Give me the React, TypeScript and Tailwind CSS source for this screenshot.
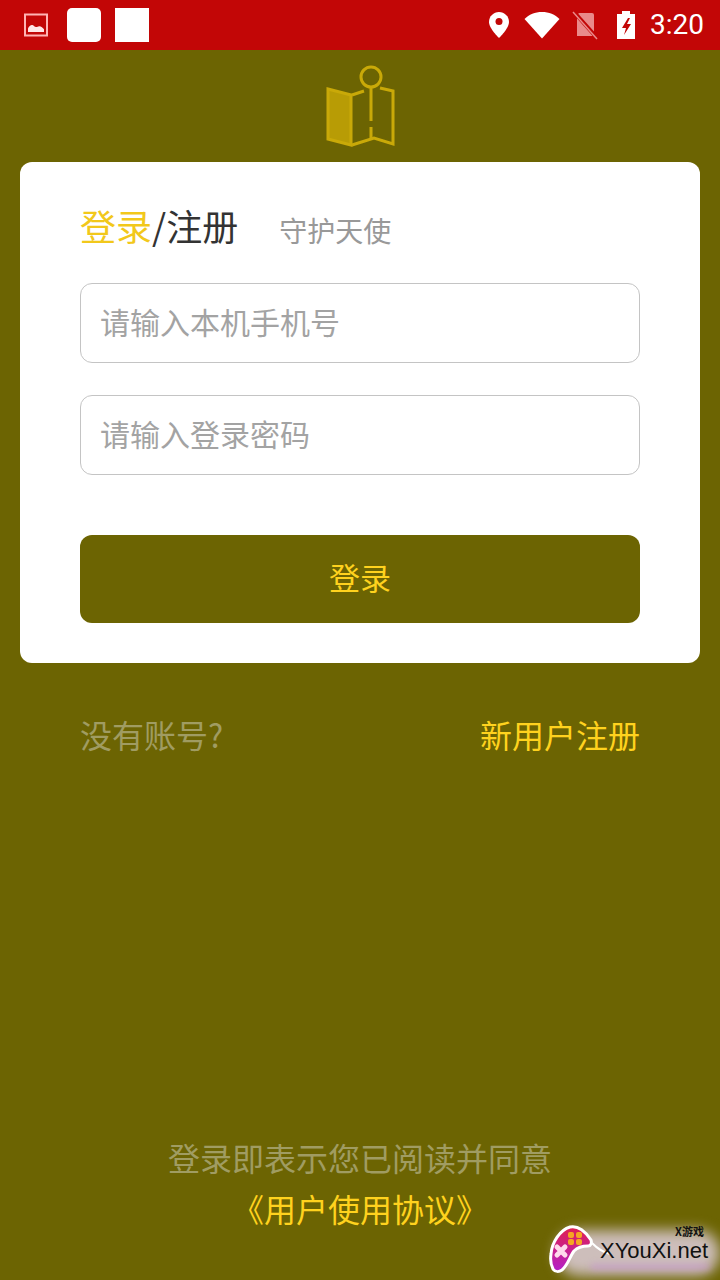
import React from 'react'

const cjk = { fontFamily: '"Noto Sans CJK SC", sans-serif' }

function StatusBar() {
  return (
    <div className="h-[50px] bg-[#c20606] flex items-center pl-[24px] pr-[16px] shrink-0">
      {/* image notification */}
      <svg width="24" height="24" viewBox="0 0 24 24" className="mr-[19px]">
        <rect x="1" y="1.5" width="22" height="21" fill="none" stroke="#ffb3b3" strokeWidth="2" />
        <path d="M4 19v-3.5c1-2.5 3-4 4.5-3.500 1.500.5 2 2 3.500 2s2-1 3.500-.8 3.500 1.500 4.500 3v2.800z" fill="#ffe6e6" />
      </svg>
      <div className="w-[34px] h-[34px] bg-white rounded-[5px] mr-[14px]" />
      <div className="w-[34px] h-[34px] bg-white" />
      <div className="flex-1" />
      <svg width="22" height="28" viewBox="0 0 22 28" className="mr-[14px]">
        <path d="M11 1C5.500 1 1 5.400 1 11c0 6.500 10 16 10 16s10-9.500 10-16C21 5.400 16.500 1 11 1z" fill="#fff" />
        <circle cx="11" cy="10.500" r="3.500" fill="#c20606" />
      </svg>
      <svg width="36" height="28" viewBox="0 0 36 28" className="mr-[12px]">
        <path d="M18 27.500L.5 8C5 3.500 11 1 18 1s13 2.500 17.500 7z" fill="#fff" />
      </svg>
      <svg width="26" height="30" viewBox="0 0 26 30" className="mr-[18px]">
        <path d="M7 3h13a2 2 0 0 1 2 2v21H5V5z" fill="#e98a8a" />
        <path d="M2 2l23 26" stroke="#c20606" strokeWidth="4" />
        <path d="M1 2l24 27" stroke="#e98a8a" strokeWidth="1.500" />
      </svg>
      <svg width="20" height="30" viewBox="0 0 20 30" className="mr-[14px]">
        <path d="M6 1h8v3h5v25H1V4h5z" fill="#fff" />
        <path d="M12 8l-6 10h4l-2 7 7-11h-4l3-6z" fill="#c20606" />
      </svg>
      <span className="text-white text-[28px] leading-none" style={{ fontFamily: 'Roboto, sans-serif' }}>3:20</span>
    </div>
  )
}

function MapLogo() {
  return (
    <svg width="70" height="82" viewBox="0 0 70 82" fill="none" stroke="#c9a908" strokeWidth="3">
      <path d="M3 24l23 6v50L3 74z" fill="#b89c05" />
      <path d="M27 30l12-4M27 80l22-7 19 6V26l-13-3" />
      <circle cx="46" cy="12" r="10" />
      <path d="M46 22v34M46 62v11" />
    </svg>
  )
}

function Field({ placeholder }: { placeholder: string }) {
  return (
    <div className="h-[80px] border border-[#c4c4c4] rounded-[12px] flex items-center pl-[19px] pb-[4px] text-[30px] text-[#a3a3a3]">
      {placeholder}
    </div>
  )
}

export default function App() {
  return (
    <div className="relative w-[720px] h-[1280px] bg-[#6c6402] flex flex-col overflow-hidden" style={cjk}>
      <StatusBar />

      <div className="flex justify-center pt-[15px] h-[112px] shrink-0">
        <MapLogo />
      </div>

      {/* Login card */}
      <div className="mx-[20px] h-[501px] bg-white rounded-[12px] px-[60px] pt-[38px] shrink-0">
        <div className="flex items-center h-[50px]">
          <span className="text-[36px] leading-none text-[#f2c81b]">登录</span>
          <span className="text-[36px] leading-none text-[#333333]">/注册</span>
          <span className="text-[28px] leading-none text-[#999999] ml-[41px] mt-[10px]">守护天使</span>
        </div>
        <div className="mt-[33px]">
          <Field placeholder="请输入本机手机号" />
        </div>
        <div className="mt-[32px]">
          <Field placeholder="请输入登录密码" />
        </div>
        <div className="mt-[60px] h-[88px] rounded-[12px] bg-[#6c6402] flex items-center justify-center pb-[4px] text-[31px] text-[#ffd21e]">
          登录
        </div>
      </div>

      <div className="flex justify-between items-center mx-[80px] mt-[46px] h-[50px] text-[32px] leading-none">
        <span className="text-[#a09c62]">没有账号?</span>
        <span className="text-[#ffd21e]">新用户注册</span>
      </div>

      <div className="flex-1" />

      <div className="flex flex-col items-center text-[32px] leading-none pb-[47px]">
        <span className="text-[#a09c62] h-[52px] flex items-center">登录即表示您已阅读并同意</span>
        <span className="text-[#ffd21e] h-[50px] flex items-center">《用户使用协议》</span>
      </div>

      {/* Watermark */}
      <div className="absolute left-[556px] top-[1230px] w-[164px] h-[46px] bg-[#e6d4ea]/80 rounded-full blur-[7px]" />
      <div className="absolute left-[590px] top-[1264px] w-[120px] h-[6px] bg-[#c79ad0]/70 rounded-full blur-[3px]" />
      <svg width="64" height="52" viewBox="0 0 64 52" className="absolute left-[548px] top-[1224px]">
        <defs>
          <linearGradient id="pad" x1="0" y1="0" x2="0" y2="1">
            <stop offset="0" stopColor="#e0204f" />
            <stop offset="1" stopColor="#b322c8" />
          </linearGradient>
        </defs>
        <path d="M44 19c6 6 10 9 18 11" fill="none" stroke="#ffffff" strokeWidth="2" />
        <path d="M3 30C4 18 12 6 22 3c8-2 16 5 21 13 1 3 0 6-3 6-5 0-10 1-14 5-4 5-6 14-12 19-3 2-7 2-9-1-2-4-3-9-2-15z" fill="url(#pad)" stroke="#fff" strokeWidth="3" />
        <rect x="20" y="8" width="6" height="6" rx="2" fill="#f5a623" />
        <rect x="28" y="8" width="6" height="6" rx="2" fill="#f5a623" />
        <rect x="20" y="15" width="6" height="6" rx="2" fill="#f5a623" />
        <rect x="28" y="15" width="6" height="6" rx="2" fill="#f5a623" />
        <path d="M9 23l8 8M17 23l-8 8" stroke="#ffd9ec" strokeWidth="5" strokeLinecap="round" />
      </svg>
      <span className="absolute left-[675px] top-[1226px] text-[11px] leading-none font-bold text-[#111111]">X游戏</span>
      <span className="absolute left-[600px] top-[1240px] text-[22px] leading-none text-[#111111]" style={{ fontFamily: '"Liberation Sans", sans-serif' }}>XYouXi.net</span>
    </div>
  )
}
